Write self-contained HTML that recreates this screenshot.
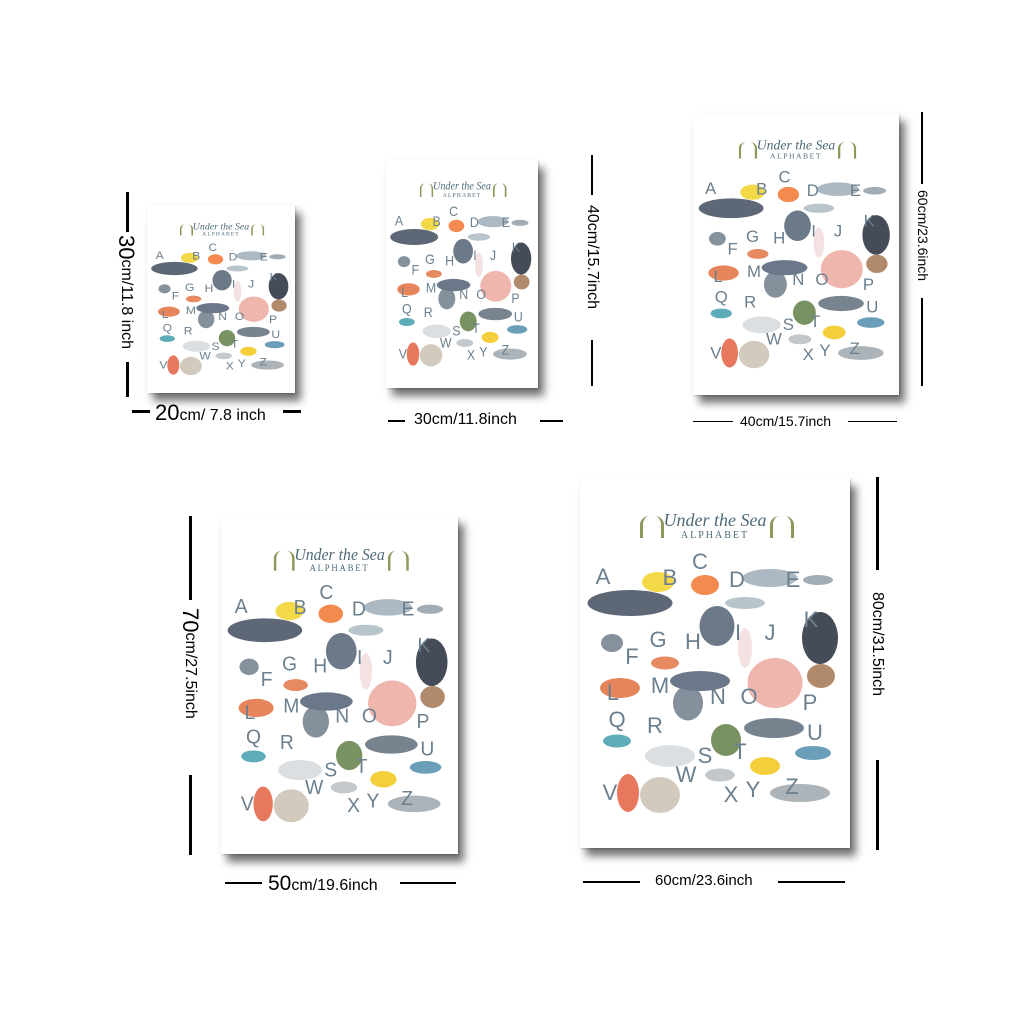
<!DOCTYPE html>
<html><head><meta charset="utf-8"><style>
body{margin:0;width:1024px;height:1024px;background:#fff;position:relative;overflow:hidden;font-family:"Liberation Sans",sans-serif}
.p{position:absolute;background:#fff;box-shadow:6px 8px 8px rgba(0,0,0,.55),1px 1px 2px rgba(0,0,0,.2);overflow:hidden}
.in{position:absolute;left:0;top:0;width:270px;height:370px;transform-origin:0 0}
.in div{position:absolute}
.l{color:#6b7f8e;font-size:22px;line-height:22px;transform:translate(-50%,-50%)}
.a{border-radius:50%;transform:translate(-50%,-50%);opacity:.82}
.t{left:0;width:270px;text-align:center;color:#4e6a78}
.ln{position:absolute;background:#000}
.d{position:absolute;color:#000;white-space:nowrap}
.v{writing-mode:vertical-rl}
</style></head><body>

<div class="p" style="left:147px;top:205px;width:148px;height:188px"><div class="in" style="transform:scale(.548,.508)">
<div class="t" style="top:32px;font-family:'Liberation Serif',serif;font-style:italic;font-size:18px">Under the Sea</div><div class="t" style="top:52px;font-family:'Liberation Serif',serif;font-size:10px;letter-spacing:2px">ALPHABET</div>
<div style="left:60px;top:38px;width:18px;height:22px;border-left:3px solid #8a9a5a;border-right:3px solid #8a9a5a;border-radius:40% 40% 0 0"></div><div style="left:190px;top:38px;width:18px;height:22px;border-left:3px solid #8a9a5a;border-right:3px solid #8a9a5a;border-radius:40% 40% 0 0"></div>
<div class="a" style="left:78px;top:104px;width:32px;height:20px;background:#f0d020"></div><div class="a" style="left:125px;top:107px;width:28px;height:20px;background:#f07028"></div><div class="a" style="left:190px;top:100px;width:55px;height:18px;background:#9aaab6"></div><div class="a" style="left:238px;top:102px;width:30px;height:10px;background:#8e9aa4"></div><div class="a" style="left:50px;top:125px;width:85px;height:26px;background:#3a4558"></div><div class="a" style="left:137px;top:148px;width:35px;height:40px;background:#4c5c6e"></div><div class="a" style="left:165px;top:125px;width:40px;height:12px;background:#a8b8c0"></div><div class="a" style="left:240px;top:160px;width:36px;height:52px;background:#1c2432"></div><div class="a" style="left:32px;top:165px;width:22px;height:18px;background:#6a7a88"></div><div class="a" style="left:85px;top:185px;width:28px;height:13px;background:#e07040"></div><div class="a" style="left:165px;top:170px;width:14px;height:40px;background:#f2dada"></div><div class="a" style="left:120px;top:203px;width:60px;height:20px;background:#4a5a70"></div><div class="a" style="left:195px;top:205px;width:55px;height:50px;background:#eba69c"></div><div class="a" style="left:241px;top:198px;width:28px;height:24px;background:#a0704a"></div><div class="a" style="left:40px;top:210px;width:40px;height:20px;background:#e06a38"></div><div class="a" style="left:108px;top:225px;width:30px;height:35px;background:#6a7888"></div><div class="a" style="left:146px;top:262px;width:30px;height:32px;background:#5a7a40"></div><div class="a" style="left:194px;top:250px;width:60px;height:20px;background:#5a6878"></div><div class="a" style="left:37px;top:263px;width:28px;height:13px;background:#3a9aaa"></div><div class="a" style="left:90px;top:278px;width:50px;height:22px;background:#d4d8dc"></div><div class="a" style="left:185px;top:288px;width:30px;height:18px;background:#f2c410"></div><div class="a" style="left:233px;top:275px;width:36px;height:14px;background:#4a8aaa"></div><div class="a" style="left:48px;top:315px;width:22px;height:38px;background:#e25a3a"></div><div class="a" style="left:80px;top:317px;width:40px;height:36px;background:#c8c0ae"></div><div class="a" style="left:140px;top:297px;width:30px;height:13px;background:#b4bcc0"></div><div class="a" style="left:220px;top:315px;width:60px;height:18px;background:#9aa4aa"></div>
<div class="l" style="left:23px;top:99px">A</div><div class="l" style="left:90px;top:100px">B</div><div class="l" style="left:120px;top:84px">C</div><div class="l" style="left:157px;top:102px">D</div><div class="l" style="left:213px;top:102px">E</div><div class="l" style="left:52px;top:179px">F</div><div class="l" style="left:78px;top:162px">G</div><div class="l" style="left:113px;top:164px">H</div><div class="l" style="left:158px;top:155px">I</div><div class="l" style="left:190px;top:155px">J</div><div class="l" style="left:231px;top:142px">K</div><div class="l" style="left:33px;top:215px">L</div><div class="l" style="left:80px;top:208px">M</div><div class="l" style="left:138px;top:219px">N</div><div class="l" style="left:169px;top:219px">O</div><div class="l" style="left:230px;top:225px">P</div><div class="l" style="left:37px;top:242px">Q</div><div class="l" style="left:75px;top:248px">R</div><div class="l" style="left:125px;top:278px">S</div><div class="l" style="left:160px;top:274px">T</div><div class="l" style="left:235px;top:255px">U</div><div class="l" style="left:30px;top:315px">V</div><div class="l" style="left:106px;top:297px">W</div><div class="l" style="left:151px;top:317px">X</div><div class="l" style="left:173px;top:312px">Y</div><div class="l" style="left:212px;top:309px">Z</div>
</div></div>

<div class="p" style="left:386px;top:160px;width:152px;height:228px"><div class="in" style="transform:scale(.563,.616)">
<div class="t" style="top:32px;font-family:'Liberation Serif',serif;font-style:italic;font-size:18px">Under the Sea</div><div class="t" style="top:52px;font-family:'Liberation Serif',serif;font-size:10px;letter-spacing:2px">ALPHABET</div>
<div style="left:60px;top:38px;width:18px;height:22px;border-left:3px solid #8a9a5a;border-right:3px solid #8a9a5a;border-radius:40% 40% 0 0"></div><div style="left:190px;top:38px;width:18px;height:22px;border-left:3px solid #8a9a5a;border-right:3px solid #8a9a5a;border-radius:40% 40% 0 0"></div>
<div class="a" style="left:78px;top:104px;width:32px;height:20px;background:#f0d020"></div><div class="a" style="left:125px;top:107px;width:28px;height:20px;background:#f07028"></div><div class="a" style="left:190px;top:100px;width:55px;height:18px;background:#9aaab6"></div><div class="a" style="left:238px;top:102px;width:30px;height:10px;background:#8e9aa4"></div><div class="a" style="left:50px;top:125px;width:85px;height:26px;background:#3a4558"></div><div class="a" style="left:137px;top:148px;width:35px;height:40px;background:#4c5c6e"></div><div class="a" style="left:165px;top:125px;width:40px;height:12px;background:#a8b8c0"></div><div class="a" style="left:240px;top:160px;width:36px;height:52px;background:#1c2432"></div><div class="a" style="left:32px;top:165px;width:22px;height:18px;background:#6a7a88"></div><div class="a" style="left:85px;top:185px;width:28px;height:13px;background:#e07040"></div><div class="a" style="left:165px;top:170px;width:14px;height:40px;background:#f2dada"></div><div class="a" style="left:120px;top:203px;width:60px;height:20px;background:#4a5a70"></div><div class="a" style="left:195px;top:205px;width:55px;height:50px;background:#eba69c"></div><div class="a" style="left:241px;top:198px;width:28px;height:24px;background:#a0704a"></div><div class="a" style="left:40px;top:210px;width:40px;height:20px;background:#e06a38"></div><div class="a" style="left:108px;top:225px;width:30px;height:35px;background:#6a7888"></div><div class="a" style="left:146px;top:262px;width:30px;height:32px;background:#5a7a40"></div><div class="a" style="left:194px;top:250px;width:60px;height:20px;background:#5a6878"></div><div class="a" style="left:37px;top:263px;width:28px;height:13px;background:#3a9aaa"></div><div class="a" style="left:90px;top:278px;width:50px;height:22px;background:#d4d8dc"></div><div class="a" style="left:185px;top:288px;width:30px;height:18px;background:#f2c410"></div><div class="a" style="left:233px;top:275px;width:36px;height:14px;background:#4a8aaa"></div><div class="a" style="left:48px;top:315px;width:22px;height:38px;background:#e25a3a"></div><div class="a" style="left:80px;top:317px;width:40px;height:36px;background:#c8c0ae"></div><div class="a" style="left:140px;top:297px;width:30px;height:13px;background:#b4bcc0"></div><div class="a" style="left:220px;top:315px;width:60px;height:18px;background:#9aa4aa"></div>
<div class="l" style="left:23px;top:99px">A</div><div class="l" style="left:90px;top:100px">B</div><div class="l" style="left:120px;top:84px">C</div><div class="l" style="left:157px;top:102px">D</div><div class="l" style="left:213px;top:102px">E</div><div class="l" style="left:52px;top:179px">F</div><div class="l" style="left:78px;top:162px">G</div><div class="l" style="left:113px;top:164px">H</div><div class="l" style="left:158px;top:155px">I</div><div class="l" style="left:190px;top:155px">J</div><div class="l" style="left:231px;top:142px">K</div><div class="l" style="left:33px;top:215px">L</div><div class="l" style="left:80px;top:208px">M</div><div class="l" style="left:138px;top:219px">N</div><div class="l" style="left:169px;top:219px">O</div><div class="l" style="left:230px;top:225px">P</div><div class="l" style="left:37px;top:242px">Q</div><div class="l" style="left:75px;top:248px">R</div><div class="l" style="left:125px;top:278px">S</div><div class="l" style="left:160px;top:274px">T</div><div class="l" style="left:235px;top:255px">U</div><div class="l" style="left:30px;top:315px">V</div><div class="l" style="left:106px;top:297px">W</div><div class="l" style="left:151px;top:317px">X</div><div class="l" style="left:173px;top:312px">Y</div><div class="l" style="left:212px;top:309px">Z</div>
</div></div>

<div class="p" style="left:693px;top:113px;width:206px;height:282px"><div class="in" style="transform:scale(.763,.762)">
<div class="t" style="top:32px;font-family:'Liberation Serif',serif;font-style:italic;font-size:18px">Under the Sea</div><div class="t" style="top:52px;font-family:'Liberation Serif',serif;font-size:10px;letter-spacing:2px">ALPHABET</div>
<div style="left:60px;top:38px;width:18px;height:22px;border-left:3px solid #8a9a5a;border-right:3px solid #8a9a5a;border-radius:40% 40% 0 0"></div><div style="left:190px;top:38px;width:18px;height:22px;border-left:3px solid #8a9a5a;border-right:3px solid #8a9a5a;border-radius:40% 40% 0 0"></div>
<div class="a" style="left:78px;top:104px;width:32px;height:20px;background:#f0d020"></div><div class="a" style="left:125px;top:107px;width:28px;height:20px;background:#f07028"></div><div class="a" style="left:190px;top:100px;width:55px;height:18px;background:#9aaab6"></div><div class="a" style="left:238px;top:102px;width:30px;height:10px;background:#8e9aa4"></div><div class="a" style="left:50px;top:125px;width:85px;height:26px;background:#3a4558"></div><div class="a" style="left:137px;top:148px;width:35px;height:40px;background:#4c5c6e"></div><div class="a" style="left:165px;top:125px;width:40px;height:12px;background:#a8b8c0"></div><div class="a" style="left:240px;top:160px;width:36px;height:52px;background:#1c2432"></div><div class="a" style="left:32px;top:165px;width:22px;height:18px;background:#6a7a88"></div><div class="a" style="left:85px;top:185px;width:28px;height:13px;background:#e07040"></div><div class="a" style="left:165px;top:170px;width:14px;height:40px;background:#f2dada"></div><div class="a" style="left:120px;top:203px;width:60px;height:20px;background:#4a5a70"></div><div class="a" style="left:195px;top:205px;width:55px;height:50px;background:#eba69c"></div><div class="a" style="left:241px;top:198px;width:28px;height:24px;background:#a0704a"></div><div class="a" style="left:40px;top:210px;width:40px;height:20px;background:#e06a38"></div><div class="a" style="left:108px;top:225px;width:30px;height:35px;background:#6a7888"></div><div class="a" style="left:146px;top:262px;width:30px;height:32px;background:#5a7a40"></div><div class="a" style="left:194px;top:250px;width:60px;height:20px;background:#5a6878"></div><div class="a" style="left:37px;top:263px;width:28px;height:13px;background:#3a9aaa"></div><div class="a" style="left:90px;top:278px;width:50px;height:22px;background:#d4d8dc"></div><div class="a" style="left:185px;top:288px;width:30px;height:18px;background:#f2c410"></div><div class="a" style="left:233px;top:275px;width:36px;height:14px;background:#4a8aaa"></div><div class="a" style="left:48px;top:315px;width:22px;height:38px;background:#e25a3a"></div><div class="a" style="left:80px;top:317px;width:40px;height:36px;background:#c8c0ae"></div><div class="a" style="left:140px;top:297px;width:30px;height:13px;background:#b4bcc0"></div><div class="a" style="left:220px;top:315px;width:60px;height:18px;background:#9aa4aa"></div>
<div class="l" style="left:23px;top:99px">A</div><div class="l" style="left:90px;top:100px">B</div><div class="l" style="left:120px;top:84px">C</div><div class="l" style="left:157px;top:102px">D</div><div class="l" style="left:213px;top:102px">E</div><div class="l" style="left:52px;top:179px">F</div><div class="l" style="left:78px;top:162px">G</div><div class="l" style="left:113px;top:164px">H</div><div class="l" style="left:158px;top:155px">I</div><div class="l" style="left:190px;top:155px">J</div><div class="l" style="left:231px;top:142px">K</div><div class="l" style="left:33px;top:215px">L</div><div class="l" style="left:80px;top:208px">M</div><div class="l" style="left:138px;top:219px">N</div><div class="l" style="left:169px;top:219px">O</div><div class="l" style="left:230px;top:225px">P</div><div class="l" style="left:37px;top:242px">Q</div><div class="l" style="left:75px;top:248px">R</div><div class="l" style="left:125px;top:278px">S</div><div class="l" style="left:160px;top:274px">T</div><div class="l" style="left:235px;top:255px">U</div><div class="l" style="left:30px;top:315px">V</div><div class="l" style="left:106px;top:297px">W</div><div class="l" style="left:151px;top:317px">X</div><div class="l" style="left:173px;top:312px">Y</div><div class="l" style="left:212px;top:309px">Z</div>
</div></div>

<div class="p" style="left:221px;top:516px;width:237px;height:338px"><div class="in" style="transform:scale(.878,.914)">
<div class="t" style="top:32px;font-family:'Liberation Serif',serif;font-style:italic;font-size:18px">Under the Sea</div><div class="t" style="top:52px;font-family:'Liberation Serif',serif;font-size:10px;letter-spacing:2px">ALPHABET</div>
<div style="left:60px;top:38px;width:18px;height:22px;border-left:3px solid #8a9a5a;border-right:3px solid #8a9a5a;border-radius:40% 40% 0 0"></div><div style="left:190px;top:38px;width:18px;height:22px;border-left:3px solid #8a9a5a;border-right:3px solid #8a9a5a;border-radius:40% 40% 0 0"></div>
<div class="a" style="left:78px;top:104px;width:32px;height:20px;background:#f0d020"></div><div class="a" style="left:125px;top:107px;width:28px;height:20px;background:#f07028"></div><div class="a" style="left:190px;top:100px;width:55px;height:18px;background:#9aaab6"></div><div class="a" style="left:238px;top:102px;width:30px;height:10px;background:#8e9aa4"></div><div class="a" style="left:50px;top:125px;width:85px;height:26px;background:#3a4558"></div><div class="a" style="left:137px;top:148px;width:35px;height:40px;background:#4c5c6e"></div><div class="a" style="left:165px;top:125px;width:40px;height:12px;background:#a8b8c0"></div><div class="a" style="left:240px;top:160px;width:36px;height:52px;background:#1c2432"></div><div class="a" style="left:32px;top:165px;width:22px;height:18px;background:#6a7a88"></div><div class="a" style="left:85px;top:185px;width:28px;height:13px;background:#e07040"></div><div class="a" style="left:165px;top:170px;width:14px;height:40px;background:#f2dada"></div><div class="a" style="left:120px;top:203px;width:60px;height:20px;background:#4a5a70"></div><div class="a" style="left:195px;top:205px;width:55px;height:50px;background:#eba69c"></div><div class="a" style="left:241px;top:198px;width:28px;height:24px;background:#a0704a"></div><div class="a" style="left:40px;top:210px;width:40px;height:20px;background:#e06a38"></div><div class="a" style="left:108px;top:225px;width:30px;height:35px;background:#6a7888"></div><div class="a" style="left:146px;top:262px;width:30px;height:32px;background:#5a7a40"></div><div class="a" style="left:194px;top:250px;width:60px;height:20px;background:#5a6878"></div><div class="a" style="left:37px;top:263px;width:28px;height:13px;background:#3a9aaa"></div><div class="a" style="left:90px;top:278px;width:50px;height:22px;background:#d4d8dc"></div><div class="a" style="left:185px;top:288px;width:30px;height:18px;background:#f2c410"></div><div class="a" style="left:233px;top:275px;width:36px;height:14px;background:#4a8aaa"></div><div class="a" style="left:48px;top:315px;width:22px;height:38px;background:#e25a3a"></div><div class="a" style="left:80px;top:317px;width:40px;height:36px;background:#c8c0ae"></div><div class="a" style="left:140px;top:297px;width:30px;height:13px;background:#b4bcc0"></div><div class="a" style="left:220px;top:315px;width:60px;height:18px;background:#9aa4aa"></div>
<div class="l" style="left:23px;top:99px">A</div><div class="l" style="left:90px;top:100px">B</div><div class="l" style="left:120px;top:84px">C</div><div class="l" style="left:157px;top:102px">D</div><div class="l" style="left:213px;top:102px">E</div><div class="l" style="left:52px;top:179px">F</div><div class="l" style="left:78px;top:162px">G</div><div class="l" style="left:113px;top:164px">H</div><div class="l" style="left:158px;top:155px">I</div><div class="l" style="left:190px;top:155px">J</div><div class="l" style="left:231px;top:142px">K</div><div class="l" style="left:33px;top:215px">L</div><div class="l" style="left:80px;top:208px">M</div><div class="l" style="left:138px;top:219px">N</div><div class="l" style="left:169px;top:219px">O</div><div class="l" style="left:230px;top:225px">P</div><div class="l" style="left:37px;top:242px">Q</div><div class="l" style="left:75px;top:248px">R</div><div class="l" style="left:125px;top:278px">S</div><div class="l" style="left:160px;top:274px">T</div><div class="l" style="left:235px;top:255px">U</div><div class="l" style="left:30px;top:315px">V</div><div class="l" style="left:106px;top:297px">W</div><div class="l" style="left:151px;top:317px">X</div><div class="l" style="left:173px;top:312px">Y</div><div class="l" style="left:212px;top:309px">Z</div>
</div></div>

<div class="p" style="left:580px;top:478px;width:270px;height:370px"><div class="in">
<div class="t" style="top:32px;font-family:'Liberation Serif',serif;font-style:italic;font-size:18px">Under the Sea</div><div class="t" style="top:52px;font-family:'Liberation Serif',serif;font-size:10px;letter-spacing:2px">ALPHABET</div>
<div style="left:60px;top:38px;width:18px;height:22px;border-left:3px solid #8a9a5a;border-right:3px solid #8a9a5a;border-radius:40% 40% 0 0"></div><div style="left:190px;top:38px;width:18px;height:22px;border-left:3px solid #8a9a5a;border-right:3px solid #8a9a5a;border-radius:40% 40% 0 0"></div>
<div class="a" style="left:78px;top:104px;width:32px;height:20px;background:#f0d020"></div><div class="a" style="left:125px;top:107px;width:28px;height:20px;background:#f07028"></div><div class="a" style="left:190px;top:100px;width:55px;height:18px;background:#9aaab6"></div><div class="a" style="left:238px;top:102px;width:30px;height:10px;background:#8e9aa4"></div><div class="a" style="left:50px;top:125px;width:85px;height:26px;background:#3a4558"></div><div class="a" style="left:137px;top:148px;width:35px;height:40px;background:#4c5c6e"></div><div class="a" style="left:165px;top:125px;width:40px;height:12px;background:#a8b8c0"></div><div class="a" style="left:240px;top:160px;width:36px;height:52px;background:#1c2432"></div><div class="a" style="left:32px;top:165px;width:22px;height:18px;background:#6a7a88"></div><div class="a" style="left:85px;top:185px;width:28px;height:13px;background:#e07040"></div><div class="a" style="left:165px;top:170px;width:14px;height:40px;background:#f2dada"></div><div class="a" style="left:120px;top:203px;width:60px;height:20px;background:#4a5a70"></div><div class="a" style="left:195px;top:205px;width:55px;height:50px;background:#eba69c"></div><div class="a" style="left:241px;top:198px;width:28px;height:24px;background:#a0704a"></div><div class="a" style="left:40px;top:210px;width:40px;height:20px;background:#e06a38"></div><div class="a" style="left:108px;top:225px;width:30px;height:35px;background:#6a7888"></div><div class="a" style="left:146px;top:262px;width:30px;height:32px;background:#5a7a40"></div><div class="a" style="left:194px;top:250px;width:60px;height:20px;background:#5a6878"></div><div class="a" style="left:37px;top:263px;width:28px;height:13px;background:#3a9aaa"></div><div class="a" style="left:90px;top:278px;width:50px;height:22px;background:#d4d8dc"></div><div class="a" style="left:185px;top:288px;width:30px;height:18px;background:#f2c410"></div><div class="a" style="left:233px;top:275px;width:36px;height:14px;background:#4a8aaa"></div><div class="a" style="left:48px;top:315px;width:22px;height:38px;background:#e25a3a"></div><div class="a" style="left:80px;top:317px;width:40px;height:36px;background:#c8c0ae"></div><div class="a" style="left:140px;top:297px;width:30px;height:13px;background:#b4bcc0"></div><div class="a" style="left:220px;top:315px;width:60px;height:18px;background:#9aa4aa"></div>
<div class="l" style="left:23px;top:99px">A</div><div class="l" style="left:90px;top:100px">B</div><div class="l" style="left:120px;top:84px">C</div><div class="l" style="left:157px;top:102px">D</div><div class="l" style="left:213px;top:102px">E</div><div class="l" style="left:52px;top:179px">F</div><div class="l" style="left:78px;top:162px">G</div><div class="l" style="left:113px;top:164px">H</div><div class="l" style="left:158px;top:155px">I</div><div class="l" style="left:190px;top:155px">J</div><div class="l" style="left:231px;top:142px">K</div><div class="l" style="left:33px;top:215px">L</div><div class="l" style="left:80px;top:208px">M</div><div class="l" style="left:138px;top:219px">N</div><div class="l" style="left:169px;top:219px">O</div><div class="l" style="left:230px;top:225px">P</div><div class="l" style="left:37px;top:242px">Q</div><div class="l" style="left:75px;top:248px">R</div><div class="l" style="left:125px;top:278px">S</div><div class="l" style="left:160px;top:274px">T</div><div class="l" style="left:235px;top:255px">U</div><div class="l" style="left:30px;top:315px">V</div><div class="l" style="left:106px;top:297px">W</div><div class="l" style="left:151px;top:317px">X</div><div class="l" style="left:173px;top:312px">Y</div><div class="l" style="left:212px;top:309px">Z</div>
</div></div>

<!-- dimension 1 -->
<div class="ln" style="left:126px;top:192px;width:3px;height:40px"></div>
<div class="ln" style="left:126px;top:362px;width:3px;height:35px"></div>
<div class="d v" style="left:112px;top:235px;font-size:16px;line-height:28px"><span style="font-size:22px">30</span>cm/11.8 inch</div>
<div class="ln" style="left:132px;top:410px;width:18px;height:3px"></div>
<div class="ln" style="left:283px;top:410px;width:18px;height:3px"></div>
<div class="d" style="left:155px;top:400px;font-size:16px"><span style="font-size:22px">20</span>cm/ 7.8 inch</div>
<!-- dimension 2 -->
<div class="ln" style="left:591px;top:155px;width:2px;height:40px"></div>
<div class="ln" style="left:591px;top:340px;width:2px;height:46px"></div>
<div class="d v" style="left:580px;top:205px;font-size:16px;line-height:24px">40cm/15.7inch</div>
<div class="ln" style="left:388px;top:420px;width:17px;height:2px"></div>
<div class="ln" style="left:540px;top:420px;width:23px;height:2px"></div>
<div class="d" style="left:414px;top:411px;font-size:16px">30cm/11.8inch</div>
<!-- dimension 3 -->
<div class="ln" style="left:921px;top:112px;width:2px;height:72px"></div>
<div class="ln" style="left:921px;top:298px;width:2px;height:88px"></div>
<div class="d v" style="left:914px;top:190px;font-size:14px;line-height:18px">60cm/23.6inch</div>
<div class="ln" style="left:693px;top:421px;width:40px;height:1px"></div>
<div class="ln" style="left:848px;top:421px;width:49px;height:1px"></div>
<div class="d" style="left:740px;top:413px;font-size:14px">40cm/15.7inch</div>
<!-- dimension 4 -->
<div class="ln" style="left:189px;top:516px;width:3px;height:84px"></div>
<div class="ln" style="left:189px;top:775px;width:3px;height:80px"></div>
<div class="d v" style="left:176px;top:608px;font-size:16px;line-height:28px"><span style="font-size:22px">70</span>cm/27.5inch</div>
<div class="ln" style="left:225px;top:882px;width:37px;height:2px"></div>
<div class="ln" style="left:400px;top:882px;width:56px;height:2px"></div>
<div class="d" style="left:268px;top:872px;font-size:16px"><span style="font-size:21px">50</span>cm/19.6inch</div>
<!-- dimension 5 -->
<div class="ln" style="left:876px;top:477px;width:3px;height:93px"></div>
<div class="ln" style="left:876px;top:760px;width:3px;height:90px"></div>
<div class="d v" style="left:864px;top:592px;font-size:16px;line-height:26px">80cm/31.5inch</div>
<div class="ln" style="left:583px;top:881px;width:57px;height:2px"></div>
<div class="ln" style="left:778px;top:881px;width:67px;height:2px"></div>
<div class="d" style="left:655px;top:872px;font-size:15px">60cm/23.6inch</div>
</body></html>
